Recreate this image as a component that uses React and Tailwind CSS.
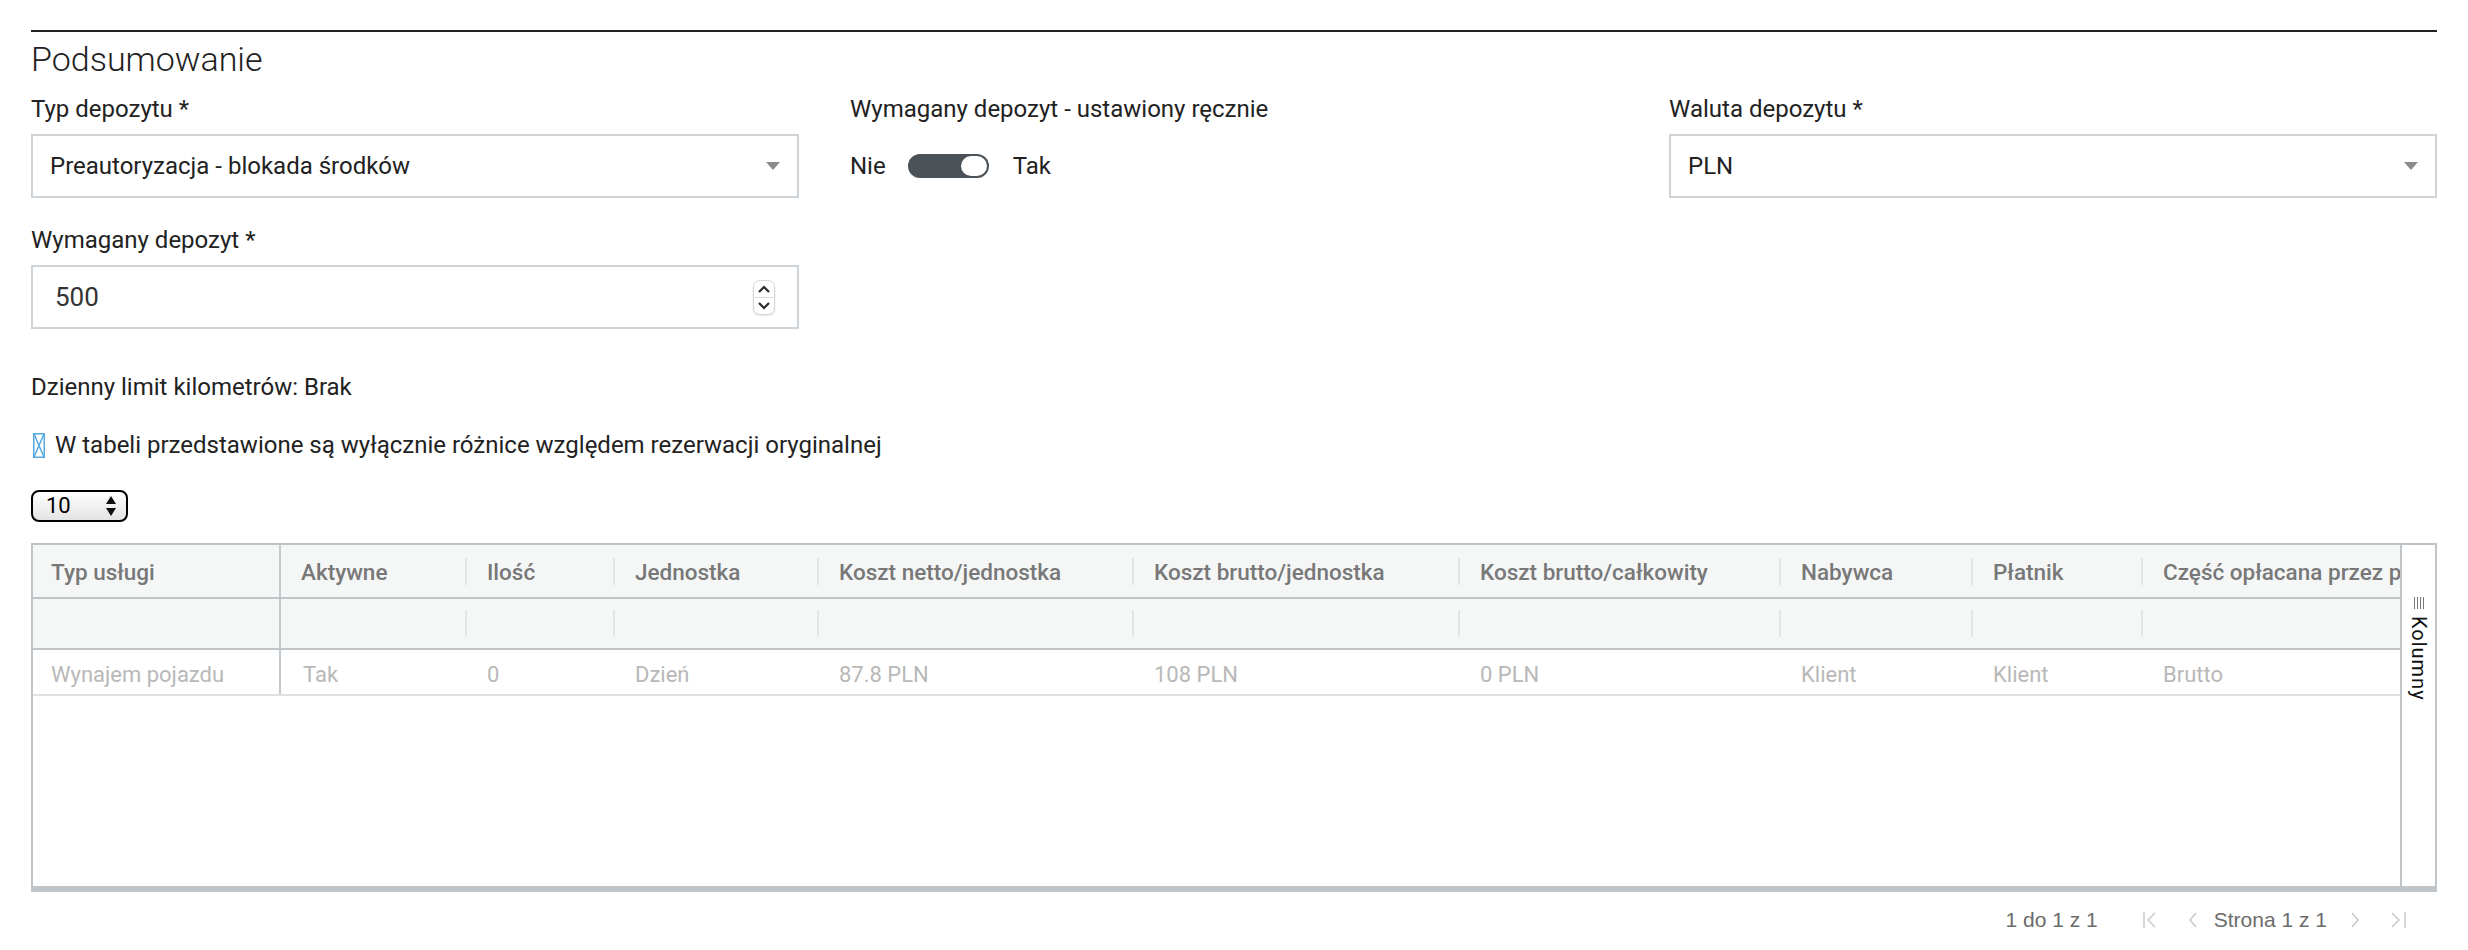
import React from 'react';

const columns = [
  { title: 'Aktywne', value: 'Tak', w: 'w-[184px]' },
  { title: 'Ilość', value: '0', w: 'w-[148px]' },
  { title: 'Jednostka', value: 'Dzień', w: 'w-[204px]' },
  { title: 'Koszt netto/jednostka', value: '87.8 PLN', w: 'w-[315px]' },
  { title: 'Koszt brutto/jednostka', value: '108 PLN', w: 'w-[326px]' },
  { title: 'Koszt brutto/całkowity', value: '0 PLN', w: 'w-[321px]' },
  { title: 'Nabywca', value: 'Klient', w: 'w-[192px]' },
  { title: 'Płatnik', value: 'Klient', w: 'w-[170px]' },
  { title: 'Część opłacana przez pracownika', value: 'Brutto', w: 'w-[420px]' },
];

const Caret = () => (
  <svg width="14" height="8" viewBox="0 0 14 8">
    <path d="M0 0h14L7 8z" fill="#8c8c8c" />
  </svg>
);

const SelectBox = ({ value }) => (
  <div className="h-[64px] border-2 border-[#cfd4d8] bg-white flex items-center justify-between pl-[17px] pr-[17px]">
    <span className="text-[24px] text-[#222]">{value}</span>
    <Caret />
  </div>
);

const Label = ({ children }) => (
  <div className="text-[24px] leading-[28px] text-[#222] mb-[11px] whitespace-nowrap">{children}</div>
);

const HeaderCell = ({ title, w, sep = true }) => (
  <div className={`${w} shrink-0 flex items-center h-full`}>
    {sep && <div className="w-[2px] h-[27px] bg-[#e2e6e8] shrink-0" />}
    {title && (
      <span className="pl-[20px] pt-[4px] text-[22.5px] font-medium text-[#787878] whitespace-nowrap">{title}</span>
    )}
  </div>
);

const PagerIcon = ({ d, w = 12 }) => (
  <svg width={w} height="18" viewBox={`0 0 ${w} 18`} fill="none" stroke="#c9c9c9" strokeWidth="1.5">
    <path d={d} />
  </svg>
);

export default function App() {
  return (
    <div className="bg-white min-h-[950px] px-[31px] pt-[30px] font-['Roboto',sans-serif]">
      <div className="h-[2px] bg-[#222]" />
      <h2 className="mt-[7px] text-[34px] leading-[40px] font-light text-[#222]">Podsumowanie</h2>

      <div className="mt-[16px] grid grid-cols-3 gap-x-[51px] gap-y-[28px]">
        <div>
          <Label>Typ depozytu *</Label>
          <SelectBox value="Preautoryzacja - blokada środków" />
        </div>
        <div>
          <Label>Wymagany depozyt - ustawiony ręcznie</Label>
          <div className="h-[64px] flex items-center text-[24px] text-[#222]">
            <span>Nie</span>
            <div className="ml-[22px] w-[81px] h-[24px] rounded-full bg-[#4a5157] flex items-center justify-end p-[2px]">
              <div className="w-[26px] h-[20px] rounded-full bg-white" />
            </div>
            <span className="ml-[24px]">Tak</span>
          </div>
        </div>
        <div>
          <Label>Waluta depozytu *</Label>
          <SelectBox value="PLN" />
        </div>
        <div>
          <Label>Wymagany depozyt *</Label>
          <div className="h-[64px] border-2 border-[#cfd4d8] bg-white flex items-center justify-between pl-[22px] pr-[22px]">
            <span className="text-[26px] text-[#333]">500</span>
            <div className="w-[22px] h-[35px] rounded-[7px] border border-[#d6d6d6] shadow-[0_1px_2px_rgba(0,0,0,0.12)] bg-white flex items-center justify-center">
              <svg width="20" height="33" viewBox="0 0 20 33" fill="none" stroke="#2b2b2b" strokeWidth="2.2">
                <path d="M5 11l5-5 5 5" />
                <path d="M1 16.5h18" stroke="#dedede" strokeWidth="1" />
                <path d="M5 22l5 5 5-5" />
              </svg>
            </div>
          </div>
        </div>
      </div>

      <div className="mt-[44px] text-[24px] leading-[28px] text-[#222]">Dzienny limit kilometrów: Brak</div>

      <div className="mt-[30px] flex items-center text-[24px] leading-[28px] text-[#222]">
        <svg width="12" height="25" viewBox="0 0 12 25" fill="none" stroke="#56a8e2" strokeWidth="1.5" className="shrink-0 ml-[2px]">
          <rect x="0.75" y="0.75" width="10.5" height="23.5" />
          <path d="M1 1l10 23M11 1L1 24" />
        </svg>
        <span className="ml-[10px]">W tabeli przedstawione są wyłącznie różnice względem rezerwacji oryginalnej</span>
      </div>

      <div className="mt-[31px] w-[97px] h-[32px] border-2 border-black rounded-[8px] bg-gradient-to-b from-white to-[#e4e4e4] flex items-center justify-between pl-[13px] pr-[9px]">
        <span className="text-[22px] leading-none text-black">10</span>
        <svg width="12" height="20" viewBox="0 0 12 20">
          <path d="M6 0l5 8H1z M6 20l5-8H1z" fill="#111" />
        </svg>
      </div>

      <div className="mt-[21px] h-[349px] border-2 border-b-[6px] border-[#bfc4c8] flex">
        <div className="flex-1 min-w-0 overflow-hidden flex flex-col">
          <div className="h-[54px] shrink-0 bg-[#f5f7f7] border-b-2 border-[#bfc4c8] flex">
            <div className="w-[248px] shrink-0 border-r-2 border-[#c5cacd] flex items-center">
              <span className="pl-[18px] pt-[4px] text-[22.5px] font-medium text-[#787878]">Typ usługi</span>
            </div>
            {columns.map((c, i) => (
              <HeaderCell key={i} title={c.title} w={c.w} sep={i !== 0} />
            ))}
          </div>
          <div className="h-[51px] shrink-0 bg-[#f5f7f7] border-b-2 border-[#bfc4c8] flex">
            <div className="w-[248px] shrink-0 border-r-2 border-[#c5cacd]" />
            {columns.map((c, i) => (
              <HeaderCell key={i} w={c.w} sep={i !== 0} />
            ))}
          </div>
          <div className="h-[46px] shrink-0 border-b-2 border-[#dfe2e4] flex text-[22px] text-[#b8b8b8]">
            <div className="w-[248px] shrink-0 border-r-2 border-[#c5cacd] flex items-center">
              <span className="pl-[18px] pt-[4px] whitespace-nowrap">Wynajem pojazdu</span>
            </div>
            {columns.map((c, i) => (
              <div key={i} className={`${c.w} shrink-0 flex items-center`}>
                <span className="pl-[22px] pt-[4px] whitespace-nowrap">{c.value}</span>
              </div>
            ))}
          </div>
          <div className="flex-1" />
        </div>
        <div className="w-[35px] shrink-0 border-l-2 border-[#bfc4c8] flex flex-col items-center pt-[52px]">
          <svg width="12" height="12" viewBox="0 0 12 12" stroke="#777" strokeWidth="1">
            <path d="M1.5 0v12M4.5 0v12M7.5 0v12M10.5 0v12" />
          </svg>
          <span className="mt-[7px] text-[20px] text-[#111] [writing-mode:vertical-rl] tracking-[1px]">Kolumny</span>
        </div>
      </div>

      <div className="h-[56px] flex items-center justify-end pr-[31px] text-[21px] text-[#6b6b6b] font-['Liberation_Sans',sans-serif]">
        <span>1 do 1 z 1</span>
        <span className="ml-[45px]"><PagerIcon w={14} d="M1 1v16M12 2L5 9l7 7" /></span>
        <span className="ml-[31px]"><PagerIcon w={10} d="M8 2L2 9l6 7" /></span>
        <span className="ml-[16px]">Strona 1 z 1</span>
        <span className="ml-[23px]"><PagerIcon w={10} d="M2 2l6 7-6 7" /></span>
        <span className="ml-[30px]"><PagerIcon w={16} d="M2 2l7 7-7 7M15 1v16" /></span>
      </div>
    </div>
  );
}
